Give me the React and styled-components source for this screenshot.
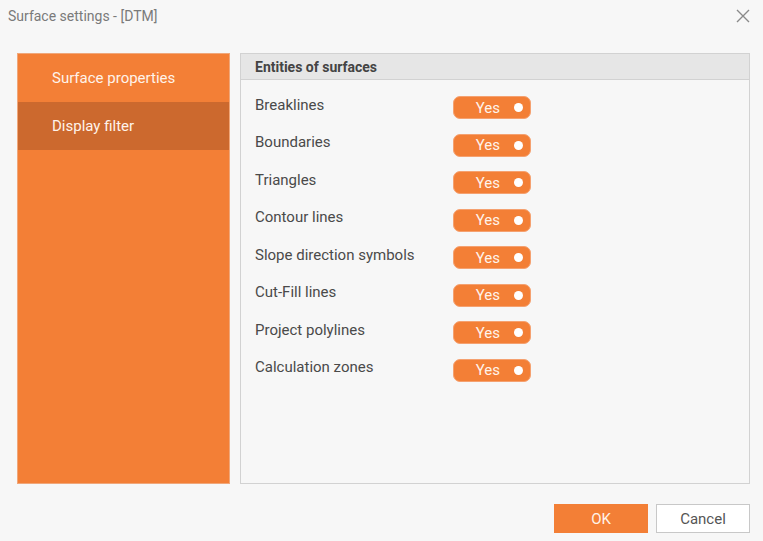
import styled, { createGlobalStyle } from 'styled-components'

const Global = createGlobalStyle`
  body {
    margin: 0;
    background: #f7f7f7;
    font-family: Roboto, "Liberation Sans", sans-serif;
  }
`

const Dialog = styled.div`
  width: 763px;
  height: 541px;
  box-sizing: border-box;
  display: flex;
  flex-direction: column;
  background: #f7f7f7;
`

const TitleBar = styled.div`
  height: 31px;
  display: flex;
  align-items: center;
  justify-content: space-between;
  padding: 0 12px 0 8px;
  color: #7a7a7a;
  font-size: 14px;
`

const Close = styled.button`
  border: none;
  background: none;
  padding: 0;
  width: 16px;
  height: 16px;
  display: flex;
  align-items: center;
  justify-content: center;
`

const Body = styled.div`
  display: flex;
  gap: 10px;
  padding: 22px 13px 0 17px;
  height: 431px;
`

const Sidebar = styled.nav`
  width: 213px;
  box-sizing: border-box;
  background: #f37f36;
  border: 1px solid #f0a77a;
  display: flex;
  flex-direction: column;
`

const NavItem = styled.div`
  height: 48px;
  display: flex;
  align-items: center;
  padding-left: 34px;
  color: #fff3ea;
  font-size: 15px;
  background: ${p => (p.$active ? '#cc692e' : 'transparent')};
`

const Panel = styled.section`
  flex: 1;
  box-sizing: border-box;
  border: 1px solid #d2d2d2;
  background: #f7f7f7;
`

const PanelHeader = styled.div`
  height: 26px;
  box-sizing: border-box;
  background: #e6e6e6;
  border-bottom: 1px solid #d2d2d2;
  display: flex;
  align-items: center;
  padding-left: 14px;
  font-size: 14px;
  font-weight: 700;
  color: #444;
`

const List = styled.div`
  padding-top: 16px;
  display: flex;
  flex-direction: column;
  gap: 14.5px;
`

const Row = styled.div`
  display: flex;
  align-items: center;
  height: 23px;
`

const Label = styled.span`
  width: 198px;
  padding-left: 14px;
  font-size: 15px;
  color: #4a4a4a;
  position: relative;
  top: -3px;
`

const Toggle = styled.div`
  width: 78px;
  height: 23px;
  box-sizing: border-box;
  border-radius: 7px;
  background: #f37f36;
  border: 1px solid #f5a170;
  display: flex;
  align-items: center;
  justify-content: flex-end;
  gap: 14px;
  padding-right: 7px;
  color: #fff3ea;
  font-size: 15px;
`

const Knob = styled.span`
  width: 9px;
  height: 9px;
  border-radius: 50%;
  background: #fff;
`

const Footer = styled.div`
  display: flex;
  justify-content: flex-end;
  gap: 8px;
  padding: 20px 13px 0 0;
`

const Button = styled.button`
  width: 94px;
  height: 29px;
  box-sizing: border-box;
  font-family: inherit;
  font-size: 15px;
  border: 1px solid ${p => (p.$primary ? '#f37f36' : '#c8c8c8')};
  background: ${p => (p.$primary ? '#f37f36' : '#fff')};
  color: ${p => (p.$primary ? '#fff3ea' : '#555')};
`

const entities = [
  'Breaklines',
  'Boundaries',
  'Triangles',
  'Contour lines',
  'Slope direction symbols',
  'Cut-Fill lines',
  'Project polylines',
  'Calculation zones',
]

export default function App() {
  return (
    <Dialog>
      <Global />
      <TitleBar>
        <span>Surface settings - [DTM]</span>
        <Close>
          <svg width="14" height="14" viewBox="0 0 14 14">
            <path d="M1 1L13 13M13 1L1 13" stroke="#8a8a8a" strokeWidth="1.4" />
          </svg>
        </Close>
      </TitleBar>
      <Body>
        <Sidebar>
          <NavItem>Surface properties</NavItem>
          <NavItem $active>Display filter</NavItem>
        </Sidebar>
        <Panel>
          <PanelHeader>Entities of surfaces</PanelHeader>
          <List>
            {entities.map(name => (
              <Row key={name}>
                <Label>{name}</Label>
                <Toggle>
                  <span>Yes</span>
                  <Knob />
                </Toggle>
              </Row>
            ))}
          </List>
        </Panel>
      </Body>
      <Footer>
        <Button $primary>OK</Button>
        <Button>Cancel</Button>
      </Footer>
    </Dialog>
  )
}
